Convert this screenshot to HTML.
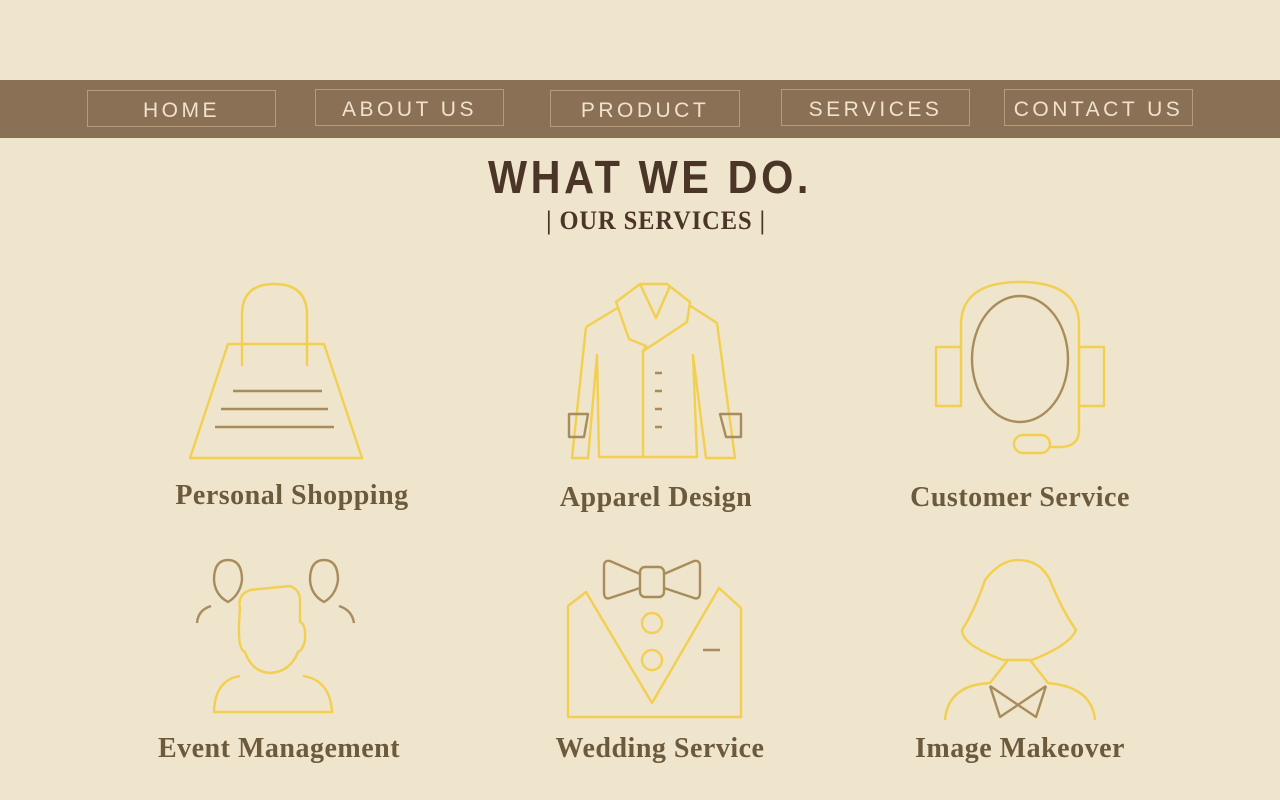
<!DOCTYPE html>
<html><head><meta charset="utf-8"><style>
body{margin:0;width:1280px;height:800px;background:#efe4cc;position:relative;overflow:hidden;font-family:"Liberation Serif",serif}
.nav{position:absolute;left:0;top:80px;width:1280px;height:58px;background:#8a7055}
.b{position:absolute;height:37px;border:1px solid #b49c7c;box-sizing:border-box;color:#f0e2cc;font-family:"Liberation Sans",sans-serif;font-size:21px;letter-spacing:3.5px;text-align:center;line-height:39px}
.t{position:absolute;left:0;width:1300px;text-align:center;color:#4a3526;font-family:"Liberation Sans",sans-serif;font-weight:bold;font-size:46px;letter-spacing:4px;top:150px;transform:scaleX(.9)}
.s{position:absolute;left:0;width:1312px;text-align:center;color:#4a3526;font-weight:bold;font-size:26px;letter-spacing:1px;top:206px;transform:scaleX(.94)}
.l{position:absolute;width:400px;margin-left:-200px;text-align:center;color:#6b5a3c;font-weight:bold;font-size:28px;letter-spacing:.5px}
svg{position:absolute;left:0;top:0}
</style></head><body>
<div class="nav">
<div class="b" style="left:87px;top:10px;width:189px">HOME</div>
<div class="b" style="left:315px;top:9px;width:189px">ABOUT US</div>
<div class="b" style="left:550px;top:10px;width:190px">PRODUCT</div>
<div class="b" style="left:781px;top:9px;width:189px">SERVICES</div>
<div class="b" style="left:1004px;top:9px;width:189px">CONTACT US</div>
</div>
<div class="t">WHAT WE DO.</div>
<div class="s">| OUR SERVICES |</div>
<div class="l" style="left:292px;top:480px">Personal Shopping</div>
<div class="l" style="left:656px;top:482px">Apparel Design</div>
<div class="l" style="left:1020px;top:482px">Customer Service</div>
<div class="l" style="left:279px;top:733px">Event Management</div>
<div class="l" style="left:660px;top:733px">Wedding Service</div>
<div class="l" style="left:1020px;top:733px">Image Makeover</div>
<svg width="1280" height="800" fill="none" stroke-width="2.4" stroke-linejoin="round">
<g stroke="#f3cf4f">
<path d="M190 458 L228 344 L324 344 L362 458 Z"/>
<path d="M242 366 V315 Q242 284 274 284 Q307 284 307 315 V366"/>
<path d="M586 327 L619 307 M717 323 L689 305"/>
<path d="M640 284 L667 284 L690 302 L687 322 L660 340 L643 351 L646 346 L629 339 L616 302 Z"/>
<path d="M640 284 L656 318 L670 286"/>
<path d="M586 327 L572 458 L588 458 L597 355 L599 457 L697 457 L693 355 L706 458 L735 458 L717 323"/>
<path d="M643 351 V457"/>
<path d="M961 346 V325 Q961 282 1020 282 Q1079 282 1079 325 V430 Q1079 447 1060 447 H1050"/>
<rect x="936" y="347" width="25" height="59"/><rect x="1079" y="347" width="25" height="59"/>
<rect x="1014" y="435" width="36" height="18" rx="9"/>
<path d="M240 608 Q237 595 250 590 L290 586 Q300 590 300 600 V622 Q306 624 305 640 Q303 650 298 652 Q290 672 270 673 Q252 672 245 652 Q238 650 239 624 Z"/>
<path d="M240 676 Q215 680 214 712 H332 Q330 680 303 676"/>
<path d="M568 606 L586 592 L652 703 L719 588 L741 608 V717 H568 Z"/>
<circle cx="652" cy="623" r="10"/><circle cx="652" cy="660" r="10"/>
<path d="M1003 660 Q962 645 962 630 Q975 610 985 580 Q1000 560 1018 560 Q1040 560 1050 580 Q1062 610 1076 630 Q1070 645 1032 660 Z"/>
<path d="M1008 660 L990 683 Q948 685 945 720 M1030 660 L1048 683 Q1092 687 1095 720"/>
</g>
<g stroke="#a88d5c">
<path d="M233 391 H322 M221 409 H328 M215 427 H334"/>
<path d="M655 373 H662 M655 391 H662 M655 409 H662 M655 427 H662" stroke-width="2.5"/>
<path d="M569 414 H588 L584 437 H569 Z M720 414 H741 V437 H726 Z"/>
<ellipse cx="1020" cy="359" rx="48" ry="63"/>
<path d="M228 560 Q242 560 242 580 Q240 595 228 602 Q215 595 214 580 Q214 560 228 560 Z"/>
<path d="M324 560 Q338 560 338 580 Q336 595 324 602 Q311 595 310 580 Q310 560 324 560 Z"/>
<path d="M211 606 Q198 610 197 623 M339 606 Q352 610 354 623"/>
<rect x="640" y="567" width="24" height="30" rx="5"/>
<path d="M640 574 L610 561 Q604 560 604 566 V592 Q604 600 610 598 L640 588 M664 574 L694 561 Q700 560 700 566 V592 Q700 600 694 598 L664 588"/>
<path d="M703 650 H720"/>
<path d="M990 686 L1000 717 L1046 686 M1046 686 L1036 717 L990 686"/>
</g>
</svg>
</body></html>
